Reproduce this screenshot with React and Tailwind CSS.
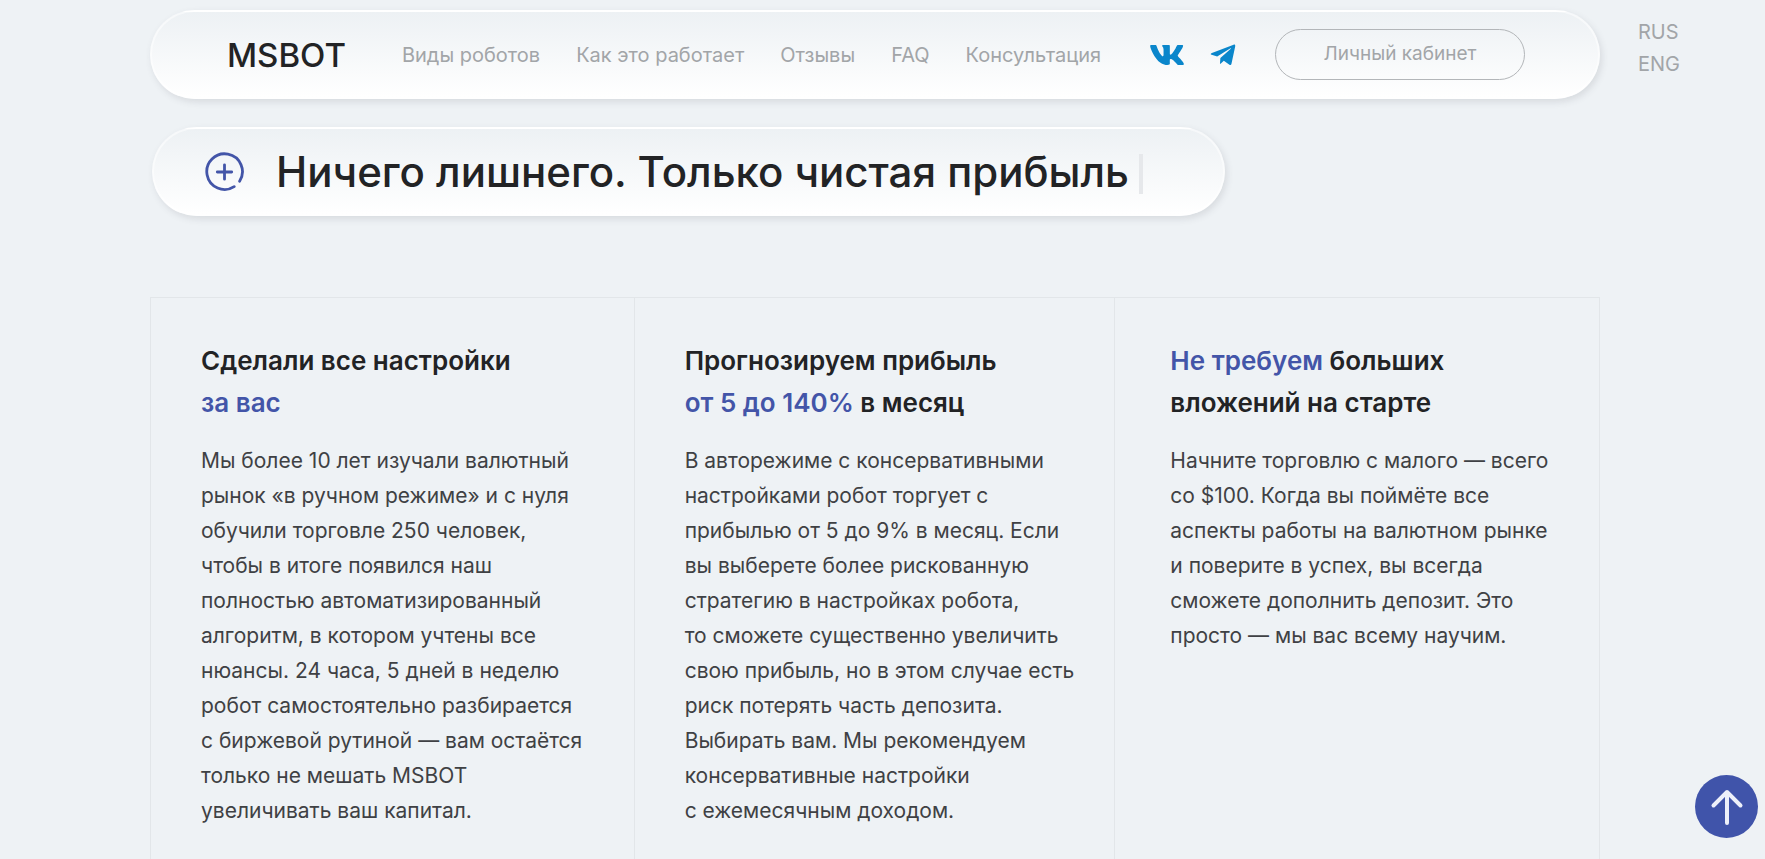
import React from 'react';
import { FaVk, FaTelegramPlane } from 'react-icons/fa';

const NAV_LINKS = ['Виды роботов', 'Как это работает', 'Отзывы', 'FAQ', 'Консультация'];

const FEATURES = [
  {
    id: 'setup',
    title: (
      <>
        Сделали все настройки
        <br />
        <span className="text-[#4355a8]">за вас</span>
      </>
    ),
    lines: [
      'Мы более 10 лет изучали валютный',
      'рынок «в ручном режиме» и с нуля',
      'обучили торговле 250 человек,',
      'чтобы в итоге появился наш',
      'полностью автоматизированный',
      'алгоритм, в котором учтены все',
      'нюансы. 24 часа, 5 дней в неделю',
      'робот самостоятельно разбирается',
      'с биржевой рутиной — вам остаётся',
      'только не мешать MSBOT',
      'увеличивать ваш капитал.',
    ],
  },
  {
    id: 'profit',
    title: (
      <>
        Прогнозируем прибыль
        <br />
        <span className="text-[#4355a8]">от 5 до 140%</span> в месяц
      </>
    ),
    lines: [
      'В авторежиме с консервативными',
      'настройками робот торгует с',
      'прибылью от 5 до 9% в месяц. Если',
      'вы выберете более рискованную',
      'стратегию в настройках робота,',
      'то сможете существенно увеличить',
      'свою прибыль, но в этом случае есть',
      'риск потерять часть депозита.',
      'Выбирать вам. Мы рекомендуем',
      'консервативные настройки',
      'с ежемесячным доходом.',
    ],
  },
  {
    id: 'deposit',
    title: (
      <>
        <span className="text-[#4355a8]">Не требуем</span> больших
        <br />
        вложений на старте
      </>
    ),
    lines: [
      'Начните торговлю с малого — всего',
      'со $100. Когда вы поймёте все',
      'аспекты работы на валютном рынке',
      'и поверите в успех, вы всегда',
      'сможете дополнить депозит. Это',
      'просто — мы вас всему научим.',
    ],
  },
];

const PlusCircle = () => (
  <svg className="h-10 w-10 shrink-0" viewBox="0 0 40 40" fill="none" stroke="#4355a8" strokeWidth="2.8" strokeLinecap="round" aria-hidden="true">
    <path d="M35.600 29.200A17.800 17.800 0 1 0 30.200 34.600" />
    <path d="M20.500 12.800v14.400M13.300 20h14.400" />
  </svg>
);

const Header = () => (
  <header className="flex items-start">
    <div className="flex h-[89px] flex-1 items-center rounded-full border-2 border-white/50 border-b-white bg-linear-to-b from-[#edf1f4] to-white pr-[73px] pl-[75px] shadow-[2px_3px_7px_rgba(60,65,80,0.13)]">
      <a href="#top" className="text-[33px] leading-10 font-medium text-[#222325]">
        MSBOT
      </a>
      <nav className="ml-14 flex gap-9 text-[20px] whitespace-nowrap text-[#a2a5a8]">
        {NAV_LINKS.map((link) => (
          <a key={link} href="#top">
            {link}
          </a>
        ))}
      </nav>
      <div className="ml-auto flex items-center gap-6 text-[#0a86cb]">
        <a href="#vk" aria-label="VK">
          <FaVk className="h-9 w-9" />
        </a>
        <a href="#telegram" aria-label="Telegram">
          <FaTelegramPlane className="h-7 w-7" />
        </a>
      </div>
      <button type="button" className="ml-[38px] h-[51px] w-[250px] rounded-full border border-[#b3b6b9] text-[19px] text-[#a2a5a8]">
        Личный кабинет
      </button>
    </div>
    <div className="flex w-[165px] flex-col pt-[6px] pl-[38px] text-[20px] leading-8 text-[#a2a5a8]">
      <a href="#rus">RUS</a>
      <a href="#eng">ENG</a>
    </div>
  </header>
);

const Feature = ({ title, lines }) => (
  <article className="border-r border-[#e2e6e9] pt-[42px] pr-6 pl-[50px] last:pl-[55px]">
    <h2 className="text-[26px] leading-[42px] font-semibold whitespace-nowrap text-[#222325]">{title}</h2>
    <p className="mt-[19px] text-[21px] leading-[35px] whitespace-pre text-[#3f4144]">{lines.join('\n')}</p>
  </article>
);

function App() {
  return (
    <div id="top" className="h-screen overflow-hidden bg-[#eef2f5] pt-[10px] pl-[150px] font-['Inter',sans-serif]">
      <Header />

      <div className="mt-7 ml-[2px] flex h-[89px] w-fit items-center rounded-full border-2 border-white/50 border-b-white bg-linear-to-b from-[#edf1f4] to-white pr-20 pl-[50px] shadow-[2px_3px_7px_rgba(60,65,80,0.13)]">
        <PlusCircle />
        <h1 className="ml-8 text-[42px] leading-[52px] font-medium whitespace-nowrap text-[#222325]">
          Ничего лишнего. Только чистая прибыль
        </h1>
        <span className="mt-1 ml-[10px] h-10 w-1 bg-[#e6e8eb]" />
      </div>

      <section className="mt-[81px] mr-[165px] grid min-h-[600px] grid-cols-[484fr_481fr_485fr] border-t border-l border-[#e2e6e9]">
        {FEATURES.map((feature) => (
          <Feature key={feature.id} title={feature.title} lines={feature.lines} />
        ))}
      </section>

      <button
        type="button"
        aria-label="Наверх"
        className="fixed right-[7px] bottom-[21px] flex h-[63px] w-[63px] items-center justify-center rounded-full bg-[#4054aa]"
      >
        <svg className="h-10 w-10" viewBox="0 0 40 40" fill="none" stroke="#edf0fa" strokeWidth="4" strokeLinecap="round" strokeLinejoin="round" aria-hidden="true">
          <path d="M20 36V5M6.500 18.500 20 5l13.500 13.500" />
        </svg>
      </button>
    </div>
  );
}

export default App;
